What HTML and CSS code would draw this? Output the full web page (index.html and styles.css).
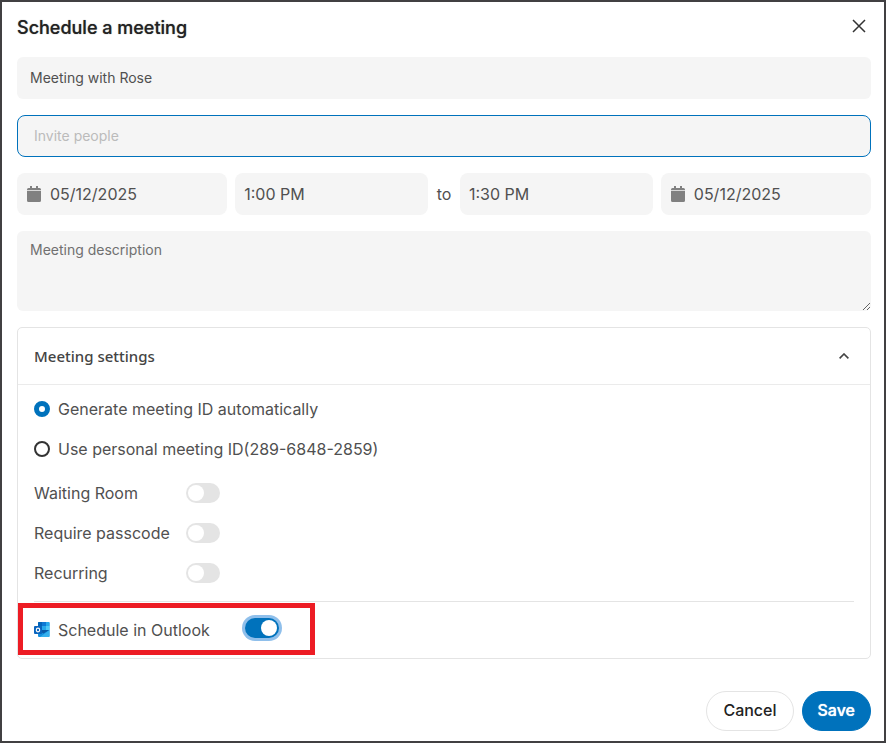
FILE: index.html
```html
<!DOCTYPE html>
<html lang="en">
<head>
  <meta charset="UTF-8" />
  <meta name="viewport" content="width=device-width, initial-scale=1" />
  <title>Schedule a meeting</title>
  <link rel="stylesheet" href="styles.css">
</head>
<body>
  <form class="dialog" autocomplete="off">
    <header class="dialog-header">
      <h1>Schedule a meeting</h1>
      <button type="button" class="close-btn" aria-label="Close">
        <svg width="14" height="14" viewBox="0 0 14 14" fill="none" stroke="#333" stroke-width="1.5">
          <path d="M1 1L13 13M13 1L1 13" />
        </svg>
      </button>
    </header>

    <input type="text" class="field" name="title" value="Meeting with Rose" aria-label="Meeting title" />
    <input type="text" class="field field-active" name="invitees" placeholder="Invite people" aria-label="Invite people" />

    <div class="time-row">
      <label class="date-field">
        <svg width="14" height="16" viewBox="0 0 14 16" fill="#808080">
          <path d="M3 0h2v2h4V0h2v2h1.500A1.500 1.500 0 0 1 14 3.500V4.200H0v-.7A1.500 1.500 0 0 1 1.500 2H3zM0 5h14v9.500a1.500 1.500 0 0 1-1.500 1.500h-11A1.500 1.500 0 0 1 0 14.500z" />
        </svg>
        <input type="text" name="start_date" value="05/12/2025" aria-label="Start date" />
      </label>
      <input type="text" class="time-field" name="start_time" value="1:00 PM" aria-label="Start time" />
      <span class="to">to</span>
      <input type="text" class="time-field" name="end_time" value="1:30 PM" aria-label="End time" />
      <label class="date-field">
        <svg width="14" height="16" viewBox="0 0 14 16" fill="#808080">
          <path d="M3 0h2v2h4V0h2v2h1.500A1.500 1.500 0 0 1 14 3.500V4.200H0v-.7A1.500 1.500 0 0 1 1.500 2H3zM0 5h14v9.500a1.500 1.500 0 0 1-1.500 1.500h-11A1.500 1.500 0 0 1 0 14.500z" />
        </svg>
        <input type="text" name="end_date" value="05/12/2025" aria-label="End date" />
      </label>
    </div>

    <textarea class="field description" name="description" placeholder="Meeting description" aria-label="Meeting description"></textarea>

    <section class="settings">
      <button type="button" class="settings-header" aria-expanded="true">
        <span>Meeting settings</span>
        <svg width="10" height="6" viewBox="0 0 10 6" fill="none" stroke="#444" stroke-width="1.600">
          <path d="M.6 5.400L5 1l4.400 4.400" />
        </svg>
      </button>

      <div class="settings-body">
        <div class="radio-group">
          <label class="radio-row">
            <input type="radio" name="meeting_id" value="auto" checked />
            Generate meeting ID automatically
          </label>
          <label class="radio-row">
            <input type="radio" name="meeting_id" value="personal" />
            Use personal meeting ID(289-6848-2859)
          </label>
        </div>

        <div class="switch-group">
          <label for="waitingRoom">Waiting Room</label>
          <input type="checkbox" class="switch" id="waitingRoom" />
          <label for="passcode">Require passcode</label>
          <input type="checkbox" class="switch" id="passcode" />
          <label for="recurring">Recurring</label>
          <input type="checkbox" class="switch" id="recurring" />
        </div>

        <div class="outlook-row">
          <svg width="16" height="16" viewBox="0 0 16 16">
            <path fill="#1490df" d="M4 1a1 1 0 0 1 1-1h9.500a1 1 0 0 1 1 1v13a1 1 0 0 1-1 1H5a1 1 0 0 1-1-1z" />
            <path fill="#0364b8" d="M4 1a1 1 0 0 1 1-1h3v4H4z" />
            <path fill="#0f78d4" d="M8 0h4v4H8zM4 4h4v4H4z" />
            <path fill="#28a8ea" d="M12 0h2.500a1 1 0 0 1 1 1v3H12zM8 4h4v4H8z" />
            <path fill="#50c8f5" d="M12 4h3.500v4H12z" />
            <path fill="#0a5aa8" d="M4 8h11.500L9.500 11.500z" />
            <path fill="#35b0ee" d="M15.500 8v6a1 1 0 0 1-1 1H6z" />
            <rect x="0" y="4" width="8" height="8" rx="1" fill="#0a64bd" />
            <ellipse cx="4" cy="8" rx="1.700" ry="1.900" fill="none" stroke="#fff" stroke-width="1.100" />
          </svg>
          <label for="outlook">Schedule in Outlook</label>
          <input type="checkbox" class="switch switch-focus" id="outlook" checked />
          <div class="highlight"></div>
        </div>
      </div>
    </section>

    <footer class="actions">
      <button type="button" class="btn">Cancel</button>
      <button type="submit" class="btn btn-primary">Save</button>
    </footer>
  </form>
</body>
</html>
```
FILE: styles.css
```css
* {
  box-sizing: border-box;
}

body {
  margin: 0;
  font-family: Inter, "Liberation Sans", sans-serif;
  font-size: 16px;
  line-height: 24px;
  color: #505050;
}

input,
textarea,
button {
  font: inherit;
  color: inherit;
  margin: 0;
}

.dialog {
  display: flex;
  flex-direction: column;
  gap: 16px;
  min-height: 100vh;
  padding: 10px 13px 10px 15px;
  border: 2px solid #414042;
  background: #fff;
}

.dialog-header {
  display: flex;
  align-items: center;
  justify-content: space-between;
  height: 29px;
}

h1 {
  margin: 0;
  padding-top: 2px;
  font-size: 18px;
  font-weight: 500;
  color: #222;
  text-shadow: 0 0 1px #777;
}

.close-btn {
  display: flex;
  padding: 4px 5px 6px;
  border: none;
  background: none;
  cursor: pointer;
}

.field {
  width: 100%;
  height: 42px;
  padding: 0 13px 2px;
  border: none;
  border-radius: 6px;
  background: #f5f5f5;
  font-size: 14px;
  outline: none;
}

.field::placeholder {
  color: #707070;
}

.field-active {
  padding: 0 16px 2px;
  border: 1px solid #0072bc;
  border-radius: 8px;
}

.field-active::placeholder {
  color: #bbb;
}

.description {
  display: block;
  height: 80px;
  padding: 9px 13px;
  line-height: 20px;
  resize: vertical;
}

.time-row {
  display: flex;
  align-items: center;
  gap: 8px;
}

.date-field,
.time-field {
  flex: 193 1 0;
  min-width: 0;
  height: 42px;
  padding: 0 9px;
  border: none;
  border-radius: 8px;
  background: #f5f5f5;
}

.date-field {
  flex-grow: 210;
  display: flex;
  align-items: center;
  gap: 9px;
  padding: 0 10px;
}

.date-field input {
  flex: 1;
  min-width: 0;
  padding: 0;
  border: none;
  background: none;
}

.to {
  width: 16px;
  text-align: center;
}

.settings {
  border: 1px solid #e4e4e4;
  border-radius: 5px;
}

.settings-header {
  display: flex;
  align-items: center;
  justify-content: space-between;
  width: 100%;
  height: 57px;
  padding: 0 21px 0 16px;
  border: none;
  border-bottom: 1px solid #ebebeb;
  background: none;
  font-family: "Noto Sans", "Open Sans", sans-serif;
  font-size: 15px;
  font-weight: 500;
  color: #444;
  cursor: pointer;
}

.settings-body {
  padding: 4px 16px 0;
}

.radio-row {
  display: flex;
  align-items: center;
  gap: 8px;
  height: 40px;
}

.radio-row input {
  appearance: none;
  width: 16px;
  height: 16px;
  border: 2px solid #333;
  border-radius: 50%;
}

.radio-row input:checked {
  border: 5px solid #0072bc;
}

.switch-group {
  display: grid;
  grid-template-columns: 152px auto;
  grid-auto-rows: 40px;
  align-items: center;
  justify-content: start;
  padding: 4px 0 8px;
  border-bottom: 1px solid #e4e4e4;
}

.switch {
  appearance: none;
  display: flex;
  align-items: center;
  width: 34px;
  height: 20px;
  padding: 0 2px;
  border-radius: 10px;
  background: #e4e4e4;
  cursor: pointer;
}

.switch::before {
  content: "";
  width: 16px;
  height: 16px;
  border-radius: 50%;
  background: #fff;
}

.switch:checked {
  justify-content: flex-end;
  background: #0072bc;
}

.switch-focus {
  margin-left: 27px;
  margin-bottom: 4px;
  box-shadow: 0 0 0 3px #8fbfeb;
}

.outlook-row {
  position: relative;
  display: flex;
  align-items: center;
  gap: 8px;
  height: 56px;
}

.highlight {
  position: absolute;
  top: 1px;
  left: -16px;
  width: 297px;
  height: 52px;
  border: 5px solid #ed1c24;
  pointer-events: none;
}

.actions {
  display: flex;
  justify-content: flex-end;
  gap: 8px;
  padding-top: 16px;
}

.btn {
  height: 40px;
  padding: 0 16px 2px;
  border: 1px solid #e4e4e4;
  border-radius: 20px;
  background: #fff;
  font-weight: 500;
  color: #222;
  cursor: pointer;
}

.btn-primary {
  padding: 0 15px 2px;
  border-color: #0072bc;
  background: #0072bc;
  color: #fff;
  text-shadow: 0 0 1px #fff;
}
```
